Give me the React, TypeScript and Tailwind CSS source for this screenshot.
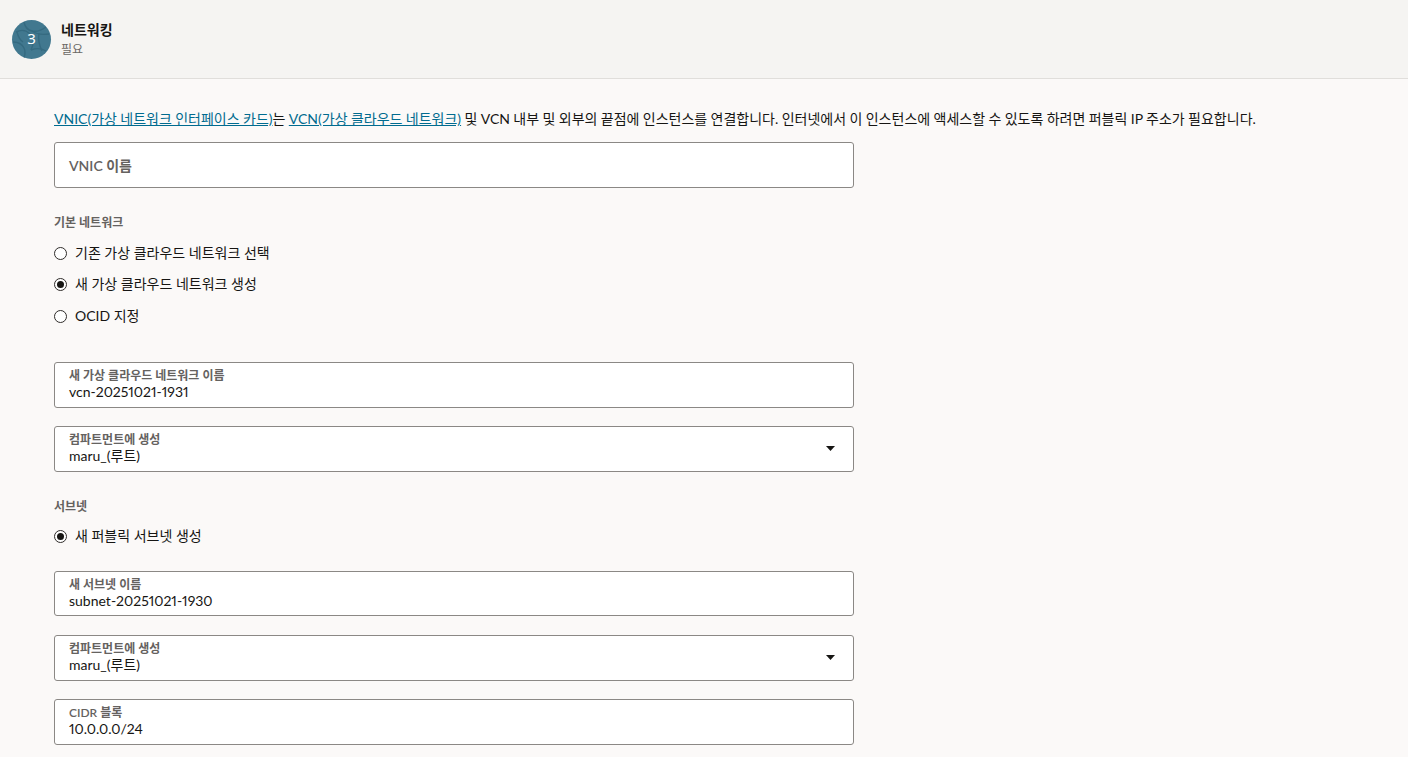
const font = "font-['Lato','Noto_Sans_CJK_KR',sans-serif]";

function StepBadge() {
  return (
    <div className="relative w-[39px] h-[39px] rounded-full overflow-hidden bg-[#41788f] flex items-center justify-center">
      <svg className="absolute inset-0" width="39" height="39" viewBox="0 0 39 39" fill="none" stroke="#356a80" strokeWidth="1.4">
        <path d="M4 12c6-3 10-2 14 2s4 10 1 16" />
        <path d="M12 2c1 5 3 8 8 9s10-1 14-4" />
        <path d="M20 11c4 3 9 4 17 3" />
        <path d="M1 22c5 0 9 2 11 6s1 7 0 10" />
        <path d="M19 30c5-2 10-2 15 1" />
        <path d="M27 13c-1 6 0 12 3 18" />
        <path d="M5 12c1 4 3 8 6 10" />
      </svg>
      <span className="relative text-white text-[15px] leading-none pb-[2px] font-['Noto_Sans',sans-serif]">3</span>
    </div>
  );
}

function Radio({ label, checked }: { label: string; checked?: boolean }) {
  return (
    <div className="flex items-center gap-[8px] h-[20px]">
      <span className="w-[13px] h-[13px] rounded-full border-[1.5px] border-[#2f2c2a] flex items-center justify-center shrink-0 bg-white">
        {checked && <span className="w-[7px] h-[7px] rounded-full bg-[#161513]" />}
      </span>
      <span className="text-[14px] text-[#161513] pb-[2px]">{label}</span>
    </div>
  );
}

function Field({ label, value, select, className = '' }: { label: string; value: string; select?: boolean; className?: string }) {
  return (
    <div className={`relative w-[800px] h-[46px] bg-white border border-[#8b8885] rounded-[3px] px-[14px] pt-[6px] ${className}`}>
      <div className="text-[12px] leading-[13px] font-semibold text-[#65625f]">{label}</div>
      <div className="text-[14px] leading-[19px] text-[#161513] proportional-nums">{value}</div>
      {select && (
        <svg className="absolute right-[18px] top-[19px]" width="9" height="5" viewBox="0 0 9 5">
          <path d="M0 0h9L4.5 5z" fill="#161513" />
        </svg>
      )}
    </div>
  );
}

export default function App() {
  return (
    <div className={`h-[757px] overflow-hidden bg-[#fbf9f8] ${font}`}>
      {/* Step header */}
      <div className="h-[79px] bg-[#f5f4f2] border-b border-[#e0dedb] flex items-center pl-[12px] gap-[10px]">
        <StepBadge />
        <div>
          <div className="text-[14px] leading-[20px] font-bold text-[#161513]">네트워킹</div>
          <div className="text-[12px] leading-[18px] text-[#6b6865] mt-[1px]">필요</div>
        </div>
      </div>

      <div className="pl-[54px] pt-[29px]">
        <p className="text-[14px] leading-[22px] text-[#161513] whitespace-nowrap [word-spacing:-0.2px]">
          <a className="text-[#006b8f] underline">VNIC(가상 네트워크 인터페이스 카드)</a>는{' '}
          <a className="text-[#006b8f] underline">VCN(가상 클라우드 네트워크)</a> 및 VCN 내부 및 외부의 끝점에 인스턴스를 연결합니다. 인터넷에서 이 인스턴스에 액세스할 수 있도록 하려면 퍼블릭 IP 주소가 필요합니다.
        </p>

        <div className="mt-[12px] w-[800px] h-[46px] bg-white border border-[#8b8885] rounded-[3px] px-[14px] flex items-center text-[14px] font-semibold text-[#65625f]">
          VNIC 이름
        </div>

        <div className="mt-[27px] text-[12px] leading-[16px] font-semibold text-[#65625f]">기본 네트워크</div>
        <div className="mt-[12px] flex flex-col gap-[11.5px]">
          <Radio label="기존 가상 클라우드 네트워크 선택" />
          <Radio label="새 가상 클라우드 네트워크 생성" checked />
          <Radio label="OCID 지정" />
        </div>

        <Field className="mt-[36px]" label="새 가상 클라우드 네트워크 이름" value="vcn-20251021-1931" />
        <Field className="mt-[18px]" label="컴파트먼트에 생성" value="maru_(루트)" select />

        <div className="mt-[27px] text-[12px] leading-[16px] font-semibold text-[#65625f]">서브넷</div>
        <div className="mt-[11px]">
          <Radio label="새 퍼블릭 서브넷 생성" checked />
        </div>

        <Field className="mt-[25px] !h-[45px]" label="새 서브넷 이름" value="subnet-20251021-1930" />
        <Field className="mt-[19px]" label="컴파트먼트에 생성" value="maru_(루트)" select />
        <Field className="mt-[18px]" label="CIDR 블록" value="10.0.0.0/24" />
      </div>
    </div>
  );
}
